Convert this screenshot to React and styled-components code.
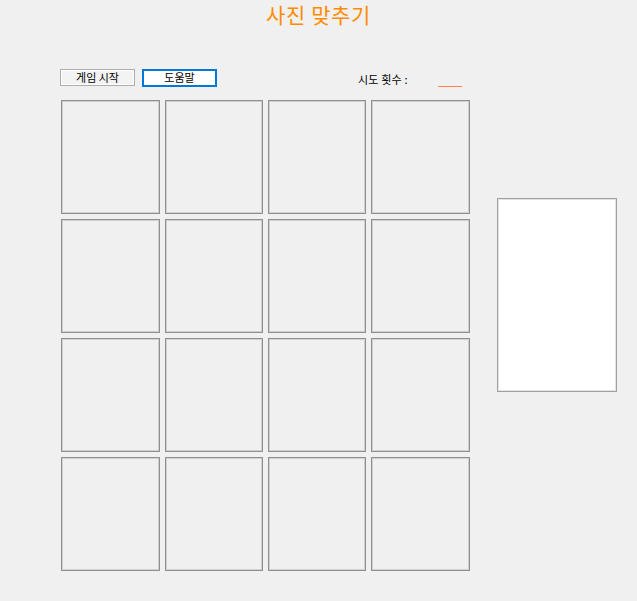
import React from "react";
import styled, { createGlobalStyle } from "styled-components";

const Global = createGlobalStyle`
  html, body { margin: 0; padding: 0; background: #f0f0f0; }
  body { font-family: "Noto Sans CJK KR", "Noto Sans", sans-serif; }
`;

const Page = styled.div`
  width: 637px;
  height: 601px;
  background: #f0f0f0;
  overflow: hidden;
`;

const Title = styled.h1`
  margin: 0;
  padding: 0;
  text-align: center;
  font-size: 21px;
  font-weight: 400;
  line-height: 28px;
  color: #ff8c00;
  letter-spacing: 0.6px;
`;

const Main = styled.div`
  display: flex;
  align-items: flex-start;
  padding: 41px 0 0 60px;
  gap: 27px;
`;

const LeftColumn = styled.div`
  display: flex;
  flex-direction: column;
  gap: 14px;
`;

const Toolbar = styled.div`
  display: flex;
  align-items: center;
  height: 17px;
`;

const Button = styled.button`
  box-sizing: border-box;
  width: 75px;
  height: ${(p) => (p.$focused ? 18 : 17)}px;
  margin: 0 7px 0 0;
  padding: 0;
  font-family: "Noto Sans CJK KR", sans-serif;
  font-size: 11px;
  line-height: 1;
  color: #000;
  background: ${(p) => (p.$focused ? "#ffffff" : "#f3f3f3")};
  border: ${(p) => (p.$focused ? "2px solid #0078d7" : "1px solid #adadad")};
  box-shadow: ${(p) => (p.$focused ? "none" : "inset 0 0 0 1px #ffffff")};
  cursor: pointer;
`;

const Label = styled.span`
  margin-left: 134px;
  font-size: 11px;
  color: #000;
  line-height: 17px;
  padding-top: 4px;
  letter-spacing: 0.2px;
`;

const Counter = styled.span`
  display: block;
  width: 24px;
  height: 1px;
  margin: 18px 0 0 30px;
  background: #ff7f50;
`;

const Grid = styled.div`
  display: grid;
  grid-template-columns: 99px 98px 98px 99px;
  grid-auto-rows: 114px;
  gap: 5px;
  margin-left: 1px;
`;

const Cell = styled.div`
  box-sizing: border-box;
  background: #f0f0f0;
  border: 1px solid #8f8f8f;
  box-shadow: inset 0 0 0 1px #d0d0d0;
`;

const Preview = styled.div`
  box-sizing: border-box;
  width: 120px;
  height: 194px;
  margin-top: 129px;
  background: #ffffff;
  border: 1px solid #a0a0a0;
  box-shadow: inset 0 0 0 1px #e3e3e3;
`;

export default function App() {
  const cells = Array.from({ length: 16 }, (_, i) => i);
  return (
    <Page>
      <Global />
      <Title>사진 맞추기</Title>
      <Main>
        <LeftColumn>
          <Toolbar>
            <Button>게임 시작</Button>
            <Button $focused>도움말</Button>
            <Label>시도 횟수 :</Label>
            <Counter />
          </Toolbar>
          <Grid>
            {cells.map((i) => (
              <Cell key={i} />
            ))}
          </Grid>
        </LeftColumn>
        <Preview />
      </Main>
    </Page>
  );
}
